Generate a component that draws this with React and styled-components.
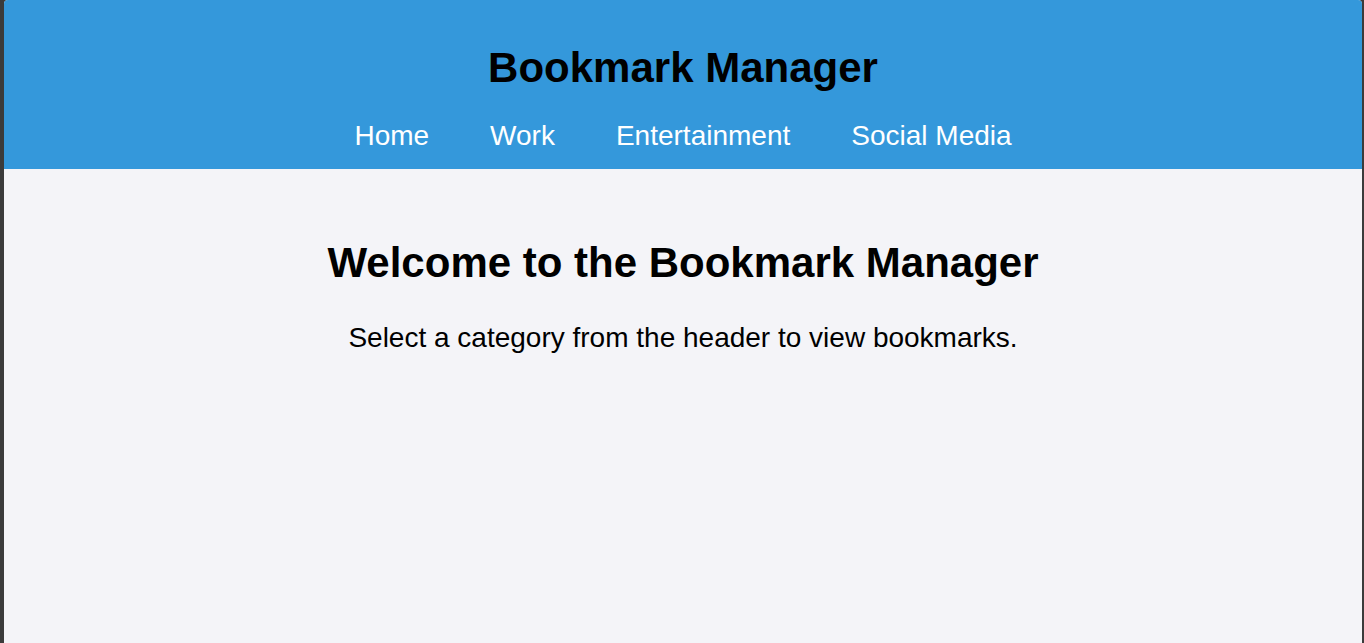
import React from 'react';
import styled, { createGlobalStyle } from 'styled-components';

const GlobalStyle = createGlobalStyle`
  html, body {
    margin: 0;
    padding: 0;
    height: 100%;
    background: #3b3b3b;
  }
  #root {
    height: 100%;
  }
`;

const Fenetre = styled.div`
  margin: 0 2px 0 4px;
  height: 100%;
  background: #f4f4f8;
  border-top-left-radius: 4px;
  border-top-right-radius: 4px;
  overflow: hidden;
  font-family: "Liberation Sans", Arial, sans-serif;
`;

const EnTete = styled.header`
  background: #3498db;
  height: 169px;
  box-sizing: border-box;
  padding-top: 43px;
  text-align: center;
`;

const Titre = styled.h1`
  margin: 0;
  font-size: 42px;
  font-weight: bold;
  line-height: 50px;
  color: #000;
`;

const Navigation = styled.nav`
  display: flex;
  justify-content: center;
  gap: 61px;
  margin-top: 27px;
`;

const LienNav = styled.a`
  color: #fff;
  font-size: 28px;
  line-height: 32px;
  text-decoration: none;
  cursor: pointer;
`;

const Contenu = styled.main`
  text-align: center;
  padding-top: 69px;
`;

const TitreAccueil = styled.h2`
  margin: 0;
  font-size: 42px;
  font-weight: bold;
  line-height: 50px;
  color: #000;
`;

const Texte = styled.p`
  margin: 34px 0 0;
  font-size: 28px;
  line-height: 32px;
  color: #000;
`;

const categories = ['Home', 'Work', 'Entertainment', 'Social Media'];

export default function App() {
  return (
    <>
      <GlobalStyle />
      <Fenetre>
        <EnTete>
          <Titre>Bookmark Manager</Titre>
          <Navigation>
            {categories.map(c => (
              <LienNav key={c}>{c}</LienNav>
            ))}
          </Navigation>
        </EnTete>
        <Contenu>
          <TitreAccueil>Welcome to the Bookmark Manager</TitreAccueil>
          <Texte>Select a category from the header to view bookmarks.</Texte>
        </Contenu>
      </Fenetre>
    </>
  );
}
